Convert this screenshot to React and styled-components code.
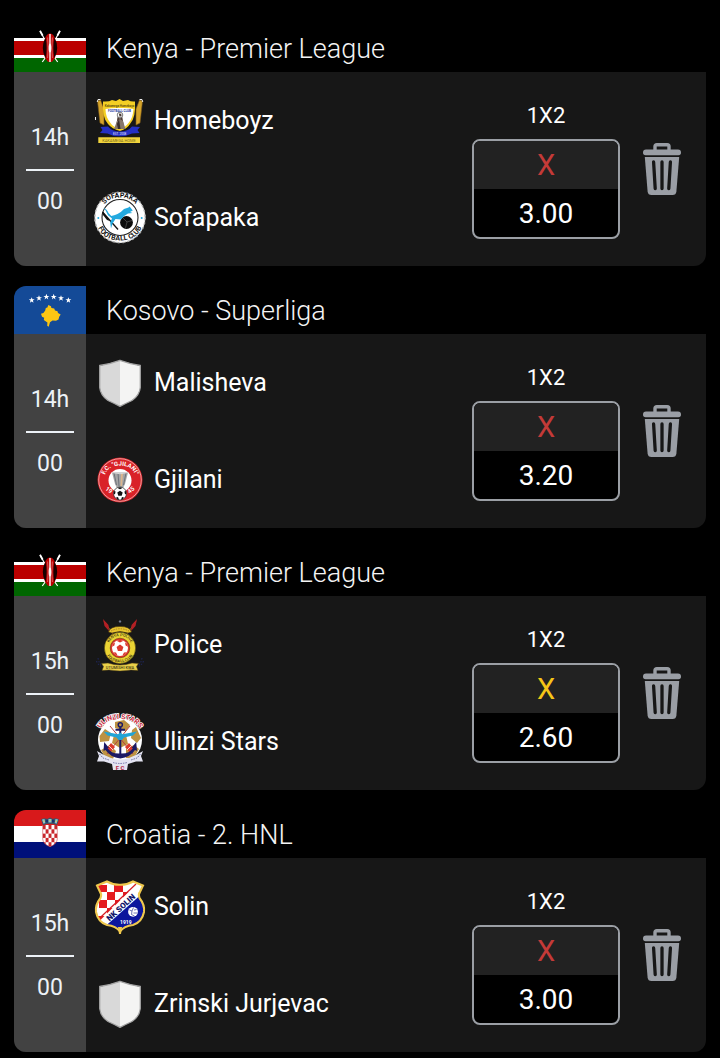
import React, { useState } from "react";
import styled, { createGlobalStyle } from "styled-components";

const GlobalStyle = createGlobalStyle`
  * {
    box-sizing: border-box;
  }

  body {
    margin: 0;
    background: #000;
    color: #fff;
    font-family: Roboto, "Liberation Sans", sans-serif;
  }
`;

const Page = styled.main`
  display: flex;
  flex-direction: column;
  gap: 20px;
  padding: 24px 14px 6px;
`;

const Card = styled.article`
  overflow: hidden;
  border-radius: 12px;
`;

const CardHeader = styled.header`
  display: flex;
  align-items: center;
  height: 48px;
`;

const FlagIcon = styled.svg`
  display: block;
  flex: none;
  width: 72px;
  height: 48px;
`;

const LeagueTitle = styled.h2`
  margin: 0;
  padding: 2px 0 0 20px;
  font-size: 27px;
  line-height: 32px;
  font-weight: 300;
  color: #f4f4f4;
`;

const CardBody = styled.div`
  display: flex;
  min-height: 194px;
  background: #171717;
`;

const Kickoff = styled.time`
  display: flex;
  flex: none;
  flex-direction: column;
  align-items: center;
  justify-content: center;
  gap: 17px;
  width: 72px;
  padding-top: 2px;
  background: #424242;
  color: #edf2f7;
  font-size: 23px;
  line-height: 28px;
`;

const KickoffDivider = styled.span`
  width: 48px;
  height: 2px;
  background: #edf2f7;
`;

const Teams = styled.div`
  display: grid;
  flex: 1;
  grid-template-rows: 1fr 1fr;
`;

const Team = styled.div`
  display: flex;
  align-items: center;
  gap: 4px;
  padding-left: 4px;
  font-size: 25px;
  line-height: 32px;
`;

const CrestIcon = styled.svg`
  display: block;
  flex: none;
  width: 60px;
  height: 61px;
`;

const Market = styled.div`
  display: flex;
  flex: none;
  flex-direction: column;
  align-items: center;
  justify-content: center;
  gap: 6px;
  width: 148px;
`;

const MarketName = styled.span`
  font-size: 22px;
  line-height: 34px;
`;

const OddsBox = styled.div`
  width: 100%;
  overflow: hidden;
  border: 2px solid #9b9fa5;
  border-radius: 8px;
  background: #000;
  text-align: center;
`;

const Pick = styled.div`
  background: #222;
  color: ${(props) => (props.$pending ? "#f5c518" : "#c43a38")};
  font-size: 29px;
  line-height: 48px;
`;

const Odds = styled.div`
  padding-top: 2px;
  font-size: 28px;
  line-height: 46px;
`;

const DeleteButton = styled.button`
  display: flex;
  flex: none;
  align-items: center;
  justify-content: center;
  width: 84px;
  margin-right: 2px;
  padding: 0;
  border: 0;
  background: none;
  color: #9a9ea5;
  cursor: pointer;

  &:hover {
    color: #c5c8cc;
  }
`;

const TrashIcon = () => (
  <svg width="38" height="52" viewBox="0 0 38 52" aria-hidden="true">
    <path
      d="M12 8V3.5Q12 1.7 13.8 1.7H24.2Q26 1.7 26 3.5V8"
      fill="none"
      stroke="currentColor"
      strokeWidth="3.4"
    />
    <path
      d="M3 6.5H35Q38 6.5 38 9.5Q38 12.3 35.5 12.3H2.5Q0 12.3 0 9.5Q0 6.5 3 6.5Z"
      fill="currentColor"
    />
    <path
      d="M1.8 14H36.2L33.4 48.5Q33 52 29.5 52H8.5Q5 52 4.6 48.5Z"
      fill="currentColor"
    />
    <path
      d="M10.6 19L12.2 45.5M19 19V45.5M27.4 19L25.8 45.5"
      fill="none"
      stroke="#171717"
      strokeWidth="3.3"
      strokeLinecap="round"
    />
  </svg>
);

const KenyaFlag = () => (
  <FlagIcon viewBox="0 0 72 48" aria-hidden="true">
    <path fill="#000" d="M0 0H72V48H0Z" />
    <path fill="#fff" d="M0 14H72V34H0Z" />
    <path fill="#b00" d="M0 17H72V31H0Z" />
    <path fill="#060" d="M0 34H72V48H0Z" />
    <path d="M26.3 7.5L31 16M45.7 7.5L41 16M31.5 33.5L28.3 38M40.5 33.5L43.7 38" stroke="#fff" strokeWidth="1.2" />
    <path d="M26 6.8L28.6 11.5M46 6.8L43.4 11.5" stroke="#fff" strokeWidth="1.8" />
    <ellipse cx="36" cy="23.8" rx="6.8" ry="14.3" fill="#b00" />
    <path fill="#160000" d="M31.6 13.5Q28.8 18.5 28.8 24Q28.8 29.5 31.6 34Q33.6 24 31.6 13.5ZM40.4 13.5Q43.2 18.5 43.2 24Q43.2 29.5 40.4 34Q38.4 24 40.4 13.5Z" />
    <path fill="#fff" d="M35.3 10H36.7V38H35.3Z" />
    <path d="M33.6 13.5Q34.8 24 33.6 34M38.4 13.5Q37.2 24 38.4 34" fill="none" stroke="#f2b4b4" strokeWidth=".5" />
    <ellipse cx="36" cy="24" rx="1.3" ry="4.5" fill="#fff" />
  </FlagIcon>
);

const star = "M0 -3L.8 -.9L3 -.9L1.2 .4L1.8 2.6L0 1.3L-1.8 2.6L-1.2 .4L-3 -.9L-.8 -.9Z";

const KosovoFlag = () => (
  <FlagIcon viewBox="0 0 72 48" aria-hidden="true">
    <path fill="#144a97" d="M0 0H72V48H0Z" />
    {[
      [17.7, 14.2],
      [25, 12.2],
      [32.4, 10.8],
      [39.7, 10.8],
      [47, 12.2],
      [54.4, 14.2],
    ].map(([x, y]) => (
      <path key={x} d={star} fill="#fff" transform={`translate(${x} ${y})`} />
    ))}
    <path
      fill="#fcc613"
      d="M34.3 19L37 20.2L37.4 22L40.2 22.6L41 24.6L43.5 25.2L44 27L46.7 28.5L45.2 30.7L44.5 33.5L42 34.8L38.5 34.5L36 36.3L34.7 40.8L33.2 39.8L33.4 36.5L29.8 34L30.2 31.8L28 30.8L27 27.8L29.4 27L31.2 24.5L31.8 22L33.4 21.6Z"
    />
  </FlagIcon>
);

const CroatiaFlag = () => (
  <FlagIcon viewBox="0 0 72 48" aria-hidden="true">
    <path fill="#d8191b" d="M0 0H72V16H0Z" />
    <path fill="#fff" d="M0 16H72V32H0Z" />
    <path fill="#00107a" d="M0 32H72V48H0Z" />
    <clipPath id="hr-arms">
      <path d="M28.7 15H43.3V29Q43 34 36 36.7Q29 34 28.7 29Z" />
    </clipPath>
    <g clipPath="url(#hr-arms)">
      <path fill="#fff" d="M28 14H44V37H28Z" />
      {Array.from({ length: 25 }, (_, i) =>
        i % 2 === 0 ? (
          <rect
            key={i}
            x={28.7 + (i % 5) * 2.92}
            y={15 + Math.floor(i / 5) * 4.3}
            width="2.92"
            height="4.3"
            fill="#c8282d"
          />
        ) : null
      )}
    </g>
    <path d="M28.7 15V29Q29 34 36 36.7Q43 34 43.3 29V15" fill="none" stroke="#c52b34" strokeWidth=".5" />
    <path fill="#3d5468" d="M29 15L27 9.2L30.5 8.3L33.2 9L36 7.5L38.8 9L41.5 8.3L45 9.2L43 15Q36 12.6 29 15Z" />
    <path fill="#8ac2d4" d="M28 9.5L30.5 9L31.3 13L29.5 13.7ZM34.5 9H37.5V12.4H34.5ZM41.5 9L44 9.5L42.5 13.7L40.7 13Z" />
    <path fill="#17306a" d="M31.8 9.8H34V12.5H31.8ZM38 9.8H40.2V12.5H38Z" />
    <path fill="#d7c95f" d="M29.3 10.5H30.5V12H29.3ZM35.4 9.7H36.7V11H35.4ZM41.7 10.5H43V12H41.7Z" />
  </FlagIcon>
);

const HomeboyzCrest = () => (
  <CrestIcon viewBox="0 0 60 61" aria-hidden="true">
    <path d="M7.5 11L10.5 10L14 19V35L10 33Z" fill="#d5a42a" stroke="#7d5b19" strokeWidth=".6" />
    <path d="M52.5 11L49.5 10L46 19V35L50 33Z" fill="#d5a42a" stroke="#7d5b19" strokeWidth=".6" />
    <path d="M7.2 12L8 9.5L10.5 9.5M52.8 12L52 9.5L49.5 9.5M5.5 27V30" stroke="#eee" fill="none" />
    <path d="M13 11.5Q19 12 22 10L26 11L29.5 9L33 11L38 10Q41 12 45 11.5Q46 28 40 34Q37 39 30 41Q22 39 18 34Q12 28 13 11.5Z" fill="#f4cf25" />
    <path d="M15.5 19Q23 17.5 29.5 18Q37 17.5 43.5 19Q43 28 38.5 33Q35 37.5 29.8 39Q23 37 20.5 33Q15.5 27 15.5 19Z" fill="#fff" />
    <text x="29.5" y="17" textAnchor="middle" fontSize="3" fontWeight="700" fill="#66520f">Kakamega Homeboyz</text>
    <text x="29.5" y="22" textAnchor="middle" fontSize="3" fontWeight="700" fill="#2838a0">FOOTBALL CLUB</text>
    <circle cx="30" cy="25" r="2.8" fill="#fff" stroke="#222" strokeWidth=".6" />
    <path d="M28.8 23.5L31.2 23.8L31.6 26L29.6 26.8ZM27.5 27L30 28.5L32.3 27L34 37H26Z" fill="#4c3b35" />
    <path d="M27 31L30 29L33 31L35.5 39H24Z" fill="#87776a" />
    <path d="M29 29L30.5 39H28L27 34Z" fill="#382d2b" />
    <path d="M10.5 37L18 36.5Q22 41.5 30 41.5Q38 41.5 42 36.5L50 37L47.5 40L49.5 43L42 43.5Q36 46.5 29.5 46.3Q23 46.5 17.5 43.5L10 43L12.5 40Z" fill="#2430c4" />
    <text x="29.7" y="45" textAnchor="middle" fontSize="3" fill="#e7e7ff">EST. 2008</text>
    <path d="M8.3 47.2H50V53H8.3Z" fill="#f1d43c" />
    <text x="29" y="51.6" textAnchor="middle" fontSize="4" fill="#7d6d1c">KAKAMEGA HOME</text>
  </CrestIcon>
);

const SofapakaCrest = () => (
  <CrestIcon viewBox="0 0 60 61" aria-hidden="true">
    <circle cx="30" cy="30.5" r="25" fill="#fff" stroke="#e9e9e9" strokeWidth="1" />
    <circle cx="30" cy="30.5" r="25.3" fill="none" stroke="#aaa" strokeWidth="1.3" strokeDasharray="2 3" />
    <circle cx="30" cy="30.5" r="18" fill="#fff" stroke="#222" strokeWidth="1.1" />
    <path id="sofa-top" d="M10.5 27Q14 10.5 30 10.5Q46 10.5 49.5 27" fill="none" />
    <path id="sofa-bottom" d="M6.5 34Q10 53.5 30 53.5Q50 53.5 53.5 34" fill="none" />
    <text fontSize="7" fontWeight="700" fill="#111" textAnchor="middle">
      <textPath href="#sofa-top" startOffset="50%">SOFAPAKA</textPath>
    </text>
    <text fontSize="7" fontWeight="700" fill="#111" textAnchor="middle">
      <textPath href="#sofa-bottom" startOffset="50%">FOOTBALL CLUB</textPath>
    </text>
    <path d="M12.5 25L28 42.5" stroke="#111" strokeWidth="1.3" />
    <path d="M12.8 24.5L20 34L17 33L13 28Z" fill="#111" />
    <circle cx="36.5" cy="35.5" r="6.4" fill="#0c0c0c" />
    <path d="M33 31L37 35L42 33.5M37 35L35.5 41" stroke="#555" strokeWidth=".7" fill="none" />
    <path
      d="M13.5 21Q17 22 18.5 26L21.3 29Q29 27.5 34 22L38.5 20.6L39.6 19.5L42.8 23.5L40 25L42.5 26L38 26.6Q34 28.5 31 32.5L25.5 32L22.5 36.5L21 41.5L20.2 35.5L22 31.5L18 28.2L15.5 23.3Z"
      fill="#23a9df"
    />
    <circle cx="8.3" cy="31" r="1" fill="#23a9df" />
    <circle cx="51.7" cy="31" r="1" fill="#23a9df" />
  </CrestIcon>
);

const GenericCrest = () => (
  <CrestIcon viewBox="0 0 60 61" aria-hidden="true">
    <path d="M30 8.5L9.7 14V35.5Q10.5 43.5 18 48.5Q24.5 51.5 30 54.3Z" fill="#d9d9d9" />
    <path d="M30 8.5L50.3 14V35.5Q49.5 43.5 42 48.5Q35.5 51.5 30 54.3Z" fill="#f4f4f3" />
    <path
      d="M30 8.3Q20 12 9.7 13.5V35.5Q10.5 43.5 18 48.5Q24.5 51.5 30 54.3Q35.5 51.5 42 48.5Q49.5 43.5 50.3 35.5V13.5Q40 12 30 8.3Z"
      fill="none"
      stroke="#a3a3a3"
      strokeWidth="1.3"
    />
  </CrestIcon>
);

const GjilaniCrest = () => (
  <CrestIcon viewBox="0 0 60 61" aria-hidden="true">
    <circle cx="30" cy="31" r="22.5" fill="#d92228" />
    <circle cx="30" cy="31" r="21.3" fill="none" stroke="#f3b9b9" strokeWidth=".8" />
    <circle cx="30" cy="31.5" r="11.5" fill="#fff" />
    <path id="gjilani-top" d="M14.2 33Q14 16.6 30 16.6Q46 16.6 45.8 33" fill="none" />
    <text fontSize="6" fontWeight="700" fill="#fff" textAnchor="middle">
      <textPath href="#gjilani-top" startOffset="50%">F.C. "GJILANI"</textPath>
    </text>
    <text x="19" y="43" fontSize="6" fontWeight="700" fill="#fff" textAnchor="middle" transform="rotate(38 19 41)">19</text>
    <text x="41" y="43" fontSize="6" fontWeight="700" fill="#fff" textAnchor="middle" transform="rotate(-38 41 41)">45</text>
    <path d="M22 23.5H38L35 35L33 39H27L25 35Z" fill="#a5a5a5" />
    <path d="M24 24L26.5 36M28 24L29 37M36 24L33.5 36" stroke="#6f747c" strokeWidth="1" />
    <path d="M31 24H33L32 37H30.5Z" fill="#ddb68d" />
    <path d="M22 23.5Q30 26 38 23.5" fill="none" stroke="#d8d8d8" />
    <circle cx="30" cy="44.5" r="6.5" fill="#fff" stroke="#222" strokeWidth=".7" />
    <path
      d="M30 41.7L32.7 43.6L31.7 46.7H28.3L27.3 43.6ZM30 38.2L32.5 39L30 40.2L27.5 39ZM24 42L25.6 42.5L25 45.3L23.7 45ZM36 42L34.4 42.5L35 45.3L36.3 45ZM26 48.5L28 48L29 50.7L27.5 50.5ZM34 48.5L32 48L31 50.7L32.5 50.5Z"
      fill="#111"
    />
  </CrestIcon>
);

const PoliceCrest = () => (
  <CrestIcon viewBox="0 0 60 61" aria-hidden="true">
    <path d="M14 7L23 20M46 7L37 20" stroke="#8e5a27" strokeWidth="1" />
    <path d="M13 5L18.5 11L19 17L14.5 12ZM47 5L41.5 11L41 17L45.5 12Z" fill="#b31f24" />
    <path d="M30 6V9M28.8 7.5H31.2" stroke="#79819a" strokeWidth=".9" />
    <path d="M18.5 18Q20 12.5 30 12.5Q40 12.5 41.5 18L38 19Q30 16 22 19Z" fill="#e8c52d" stroke="#4d3810" strokeWidth=".6" />
    <path d="M21 17Q30 12.5 39 17" fill="none" stroke="#9d6b28" strokeWidth=".8" strokeDasharray="1.5 1" />
    <circle cx="30" cy="34" r="15.7" fill="#ead333" stroke="#2d220f" strokeWidth=".5" />
    <path id="police-top" d="M18.6 36Q17.5 22.2 30 22.2Q42.5 22.2 41.4 36" fill="none" />
    <path id="police-bottom" d="M15.7 32Q15.4 48.3 30 48.3Q44.6 48.3 44.3 32" fill="none" />
    <text fontSize="4" fontWeight="500" fill="#3b3410" textAnchor="middle">
      <textPath href="#police-top" startOffset="50%">KENYA POLICE</textPath>
    </text>
    <text fontSize="4" fontWeight="500" fill="#3b3410" textAnchor="middle">
      <textPath href="#police-bottom" startOffset="50%">FOOTBALL CLUB</textPath>
    </text>
    <circle cx="30" cy="34" r="9.8" fill="#dc382d" stroke="#4d1c13" strokeWidth=".5" />
    <circle cx="30" cy="34" r="8" fill="#fff" />
    <path
      d="M30 30.6L33.4 33L32.1 36.9H27.9L26.6 33ZM26.5 26.7L30 28.4L33.5 26.7L30 25.8ZM22 32.8L24.4 31.6L25 28.2L22.8 30ZM38 32.8L35.6 31.6L35 28.2L37.2 30ZM23.4 38.2L26 38.6L27.6 41.6L25 40.4ZM36.6 38.2L34 38.6L32.4 41.6L35 40.4Z"
      fill="#dc382d"
    />
    <path d="M8 44Q9 50 13 52M52 44Q51 50 47 52M6.5 47Q8 51 11 52M53.5 47Q52 51 49 52" fill="none" stroke="#1f2656" strokeWidth="1.1" strokeDasharray="1.5 1.5" />
    <path d="M11.5 49.5L18 49Q30 53 42 49L48.5 49.5L46.5 52.5L48 56.5L41 56Q30 58 19 56L12 56.5L13.5 52.5Z" fill="#ead04a" stroke="#4b3b13" strokeWidth=".5" />
    <text x="30" y="55.2" fontSize="4" fontWeight="500" fill="#443910" textAnchor="middle">UTUMISHI KWA</text>
  </CrestIcon>
);

const UlinziCrest = () => (
  <CrestIcon viewBox="0 0 60 61" aria-hidden="true">
    <circle cx="30" cy="29" r="22" fill="#fff" />
    <path
      d="M25 11L34 9L40 14L36 20L25 17ZM9.5 25L15 18L21 22L19 30L10 31ZM42 19L46 16L51 27L47 32L41 27ZM11 39L20 34L26 40L23 48L15 46ZM36 38L44 34L49 38L44 47L36 47ZM24 24L36 24L38 33L30 37L22 32Z"
      fill="#bd9242"
    />
    <path id="ulinzi-top" d="M8 25.5Q11 8 30 8Q49 8 52 25.5" fill="none" />
    <text fontSize="7" fontWeight="700" fill="#c92b3e" stroke="#fff" strokeWidth="1.6" paintOrder="stroke" textAnchor="middle">
      <textPath href="#ulinzi-top" startOffset="50%">ULINZI STARS</textPath>
    </text>
    <path d="M20 15L43 43M40 15L17 43" stroke="#b8413f" strokeWidth="1" />
    <path d="M17 37L21 32L25 36L19 43ZM43 37L39 32L35 36L41 43Z" fill="#dc3b2c" />
    <path d="M19 35L23 39M41 35L37 39" stroke="#fff" strokeWidth=".8" />
    <circle cx="30.3" cy="13.8" r="2.1" fill="none" stroke="#1c1a65" strokeWidth="1.4" />
    <path d="M30.3 16V44M25.5 18.8H35" stroke="#1c1a65" strokeWidth="2" />
    <path d="M14.2 31L19 37L17.5 37Q21 42.5 28.5 42.5H32Q39.5 42.5 43 37L41.5 37L46.2 31L47 40L45 39Q40 46.5 30.3 47.5Q20.5 46.5 15.5 39L13.5 40Z" fill="#1c1a65" />
    <path d="M13.5 20.5L28 23.2L30.3 21.5L32.5 23.2L47 20.5L43 24.5L34 26.5L32 29H28.5L26.5 26.5L17.5 24.5Z" fill="#23a4d5" />
    <path d="M7 40L13 43.5L21 47Q30 50 39 47L47 43.5L53 40L51 45L53 50.5L46 50.5L38 53L37 59H23L22 53L14 50.5L7 50.5L9 45Z" fill="#e4e4f1" />
    <path d="M9.5 43L13 47L19 49M50.5 43L47 47L41 49M23 51.5Q30 53.5 37 51.5" fill="none" stroke="#6668a0" strokeWidth=".9" strokeDasharray="1.5 1" />
    <text x="30" y="59" fontSize="6" fontWeight="900" fill="#b7304c" textAnchor="middle">F C</text>
  </CrestIcon>
);

const solinShield =
  "M7 9.5L17 5.5Q23 9 30 8.8Q37 9 43 5.5L53 9.5L50 16Q48 18 49.5 22Q55 29 54 36Q52 46 43 49Q34 50 30 55.5Q26 50 17 49Q8 46 6 36Q5 29 10.5 22Q12 18 10 16Z";

const SolinCrest = () => (
  <CrestIcon viewBox="0 0 60 61" aria-hidden="true">
    <clipPath id="solin-shield">
      <path d={solinShield} />
    </clipPath>
    <g clipPath="url(#solin-shield)">
      <path d="M0 0H60V61H0Z" fill="#fff" />
      <path
        d="M8 9H17V16H8ZM24 9H33V16H24ZM17 16H25V24H17ZM33 16H42V24H33ZM9 24H17V32H9ZM25 24H33V32H25ZM17 32H25V40H17ZM5 40H17V48H5Z"
        fill="#e41b1f"
      />
      <path d="M6 48.5L48 6.5L60 12L16 54Z" fill="#fff" />
      <path d="M6 45.5L46 8" stroke="#d51c24" strokeWidth="1.2" />
      <path d="M15 50.5L54 16L60 60H10Z" fill="#0b169d" />
    </g>
    <path d={solinShield} fill="none" stroke="#efc84d" strokeWidth="2.1" />
    <path d="M28 51H32L31 58H29Z" fill="#efc84d" />
    <text x="31" y="34.2" fontSize="8" fontWeight="900" fill="#101569" textAnchor="middle" transform="rotate(-42 31 31.5)">NK SOLIN</text>
    <circle cx="43" cy="35.8" r="4.9" fill="#fff" />
    <path d="M39.5 34L42 35L43.5 31.5M42 35L41.5 38.5L44.5 40M43.5 37L47.5 37M44 34L46.5 33.5" fill="none" stroke="#4a549f" strokeWidth=".8" />
    <text x="35.8" y="47.5" fontSize="5" fontWeight="700" fill="#fff" textAnchor="middle">1919</text>
  </CrestIcon>
);

const matches = [
  {
    id: 1,
    Flag: KenyaFlag,
    league: "Kenya - Premier League",
    hour: "14",
    minute: "00",
    teams: [
      { name: "Homeboyz", Crest: HomeboyzCrest },
      { name: "Sofapaka", Crest: SofapakaCrest },
    ],
    odds: "3.00",
  },
  {
    id: 2,
    Flag: KosovoFlag,
    league: "Kosovo - Superliga",
    hour: "14",
    minute: "00",
    teams: [
      { name: "Malisheva", Crest: GenericCrest },
      { name: "Gjilani", Crest: GjilaniCrest },
    ],
    odds: "3.20",
  },
  {
    id: 3,
    Flag: KenyaFlag,
    league: "Kenya - Premier League",
    hour: "15",
    minute: "00",
    teams: [
      { name: "Police", Crest: PoliceCrest },
      { name: "Ulinzi Stars", Crest: UlinziCrest },
    ],
    odds: "2.60",
    pending: true,
  },
  {
    id: 4,
    Flag: CroatiaFlag,
    league: "Croatia - 2. HNL",
    hour: "15",
    minute: "00",
    teams: [
      { name: "Solin", Crest: SolinCrest },
      { name: "Zrinski Jurjevac", Crest: GenericCrest },
    ],
    odds: "3.00",
  },
];

const MatchCard = ({ match, onDelete }) => {
  const { Flag, league, hour, minute, teams, odds, pending } = match;

  return (
    <Card>
      <CardHeader>
        <Flag />
        <LeagueTitle>{league}</LeagueTitle>
      </CardHeader>
      <CardBody>
        <Kickoff dateTime={`${hour}:${minute}`}>
          <span>{hour}h</span>
          <KickoffDivider />
          <span>{minute}</span>
        </Kickoff>
        <Teams>
          {teams.map(({ name, Crest }) => (
            <Team key={name}>
              <Crest />
              <span>{name}</span>
            </Team>
          ))}
        </Teams>
        <Market>
          <MarketName>1X2</MarketName>
          <OddsBox>
            <Pick $pending={pending}>X</Pick>
            <Odds>{odds}</Odds>
          </OddsBox>
        </Market>
        <DeleteButton type="button" aria-label="Delete" onClick={() => onDelete(match.id)}>
          <TrashIcon />
        </DeleteButton>
      </CardBody>
    </Card>
  );
};

const App = () => {
  const [items, setItems] = useState(matches);

  const handleDelete = (id) => {
    setItems(items.filter((item) => item.id !== id));
  };

  return (
    <>
      <GlobalStyle />
      <Page>
        {items.map((match) => (
          <MatchCard key={match.id} match={match} onDelete={handleDelete} />
        ))}
      </Page>
    </>
  );
};

export default App;
